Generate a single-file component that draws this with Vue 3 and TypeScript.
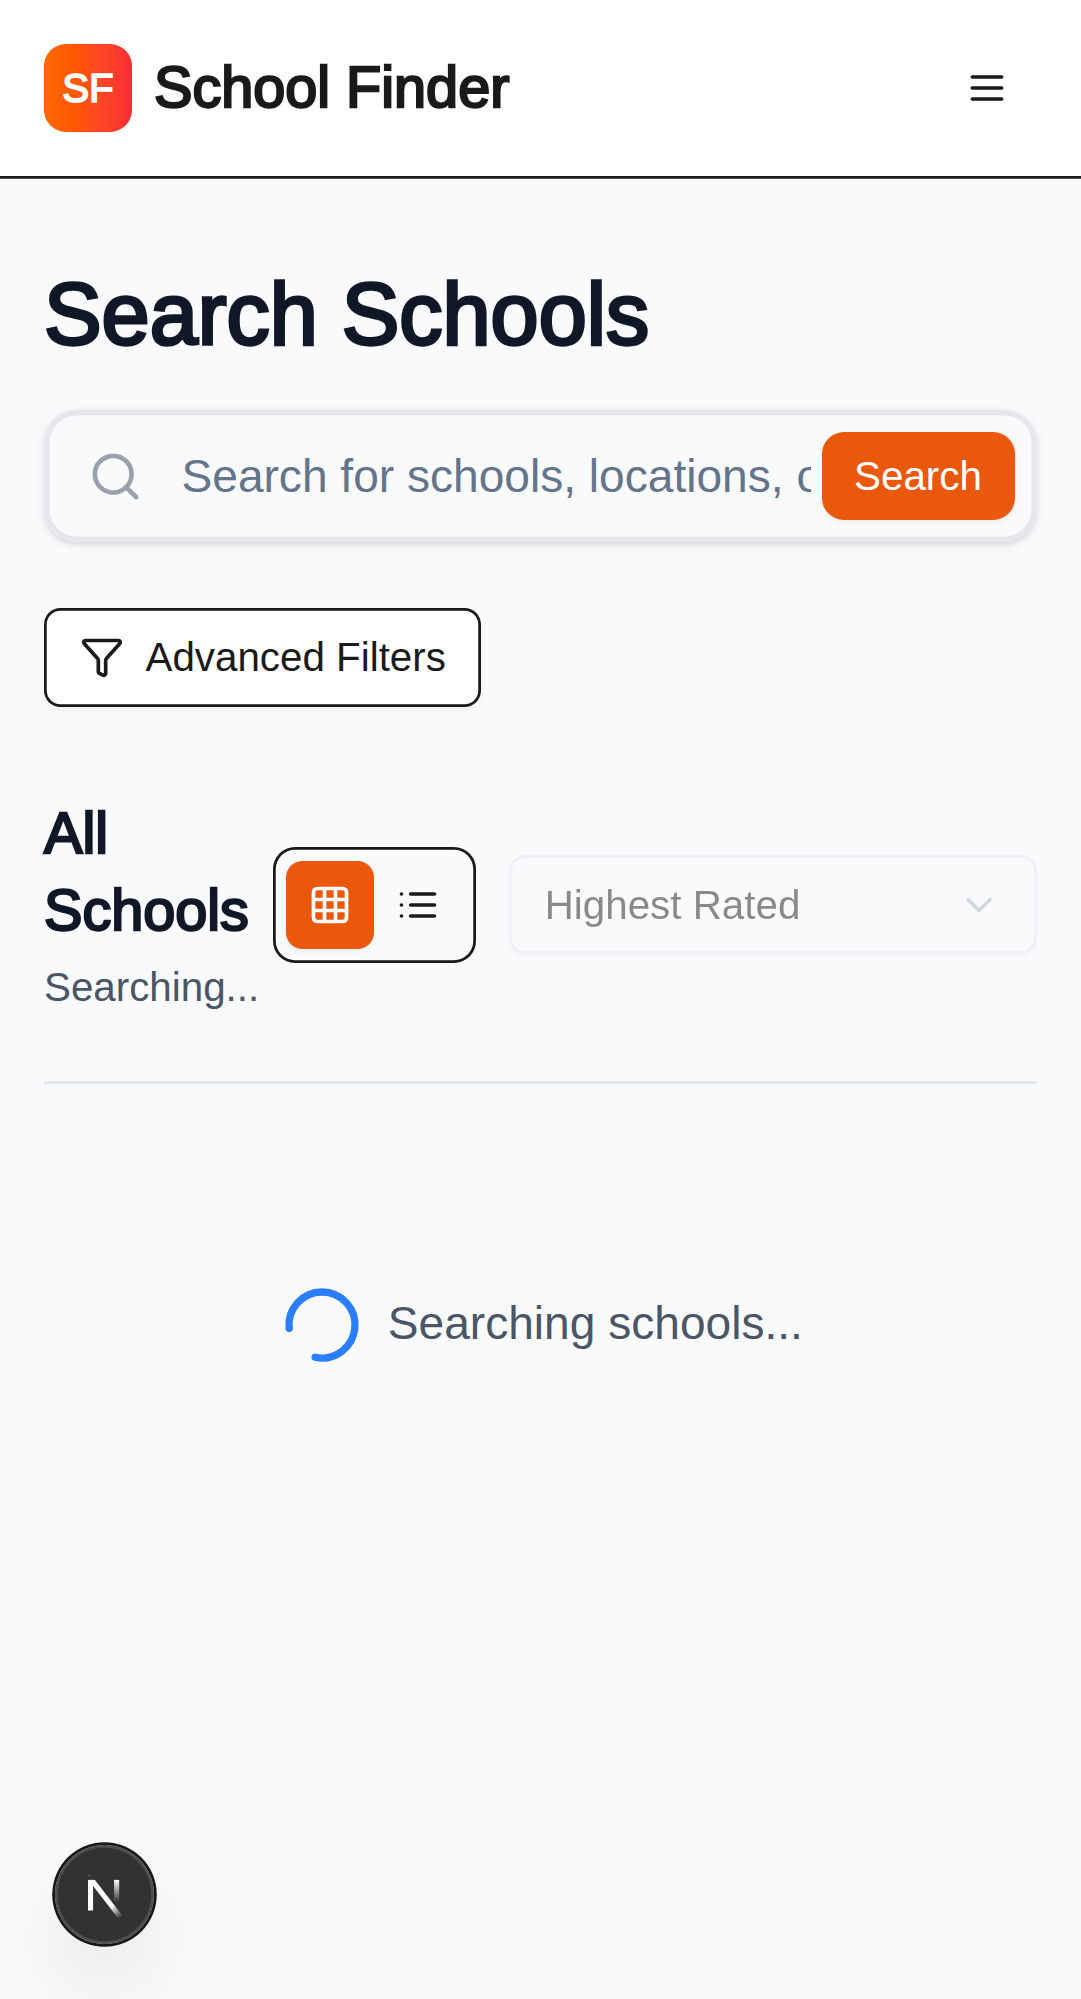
<script setup lang="ts">
import { ref } from 'vue'

type ViewMode = 'grid' | 'list'

const query = ref('')
const view = ref<ViewMode>('grid')
const sortLabel = ref('Highest Rated')
</script>

<template>
  <div class="page">
    <header class="header">
      <a class="brand">
        <span class="logo">SF</span>
        <span class="brand-name">School Finder</span>
      </a>
      <button class="menu-button" type="button" aria-label="Menu">
        <svg class="icon" viewBox="0 0 24 24">
          <path d="M4 6h16M4 12h16M4 18h16" />
        </svg>
      </button>
    </header>

    <main class="content">
      <h1 class="title">Search Schools</h1>

      <div class="search">
        <svg class="icon search-icon" viewBox="0 0 24 24">
          <circle cx="11" cy="11" r="8" />
          <path d="m21 21-4.3-4.3" />
        </svg>
        <input
          v-model="query"
          class="search-input"
          type="text"
          placeholder="Search for schools, locations, or programs..."
        />
        <button class="search-button" type="button">Search</button>
      </div>

      <button class="filters" type="button">
        <svg class="icon" viewBox="0 0 24 24">
          <path
            d="M10 20a1 1 0 0 0 .553.895l2 1A1 1 0 0 0 14 21v-7a2 2 0 0 1 .517-1.341L21.74 4.67A1 1 0 0 0 21 3H3a1 1 0 0 0-.742 1.67l7.225 7.989A2 2 0 0 1 10 14z"
          />
        </svg>
        <span>Advanced Filters</span>
      </button>

      <section class="results-bar">
        <div class="results-heading">
          <h2>All Schools</h2>
          <p>Searching...</p>
        </div>
        <div class="controls">
          <div class="toggle">
            <button
              class="toggle-item"
              :class="{ active: view === 'grid' }"
              type="button"
              aria-label="Grid view"
              @click="view = 'grid'"
            >
              <svg class="icon" viewBox="0 0 24 24">
                <rect width="18" height="18" x="3" y="3" rx="2" />
                <path d="M3 9h18M3 15h18M9 3v18M15 3v18" />
              </svg>
            </button>
            <button
              class="toggle-item"
              :class="{ active: view === 'list' }"
              type="button"
              aria-label="List view"
              @click="view = 'list'"
            >
              <svg class="icon" viewBox="0 0 24 24">
                <path d="M8 6h13M8 12h13M8 18h13M3 6h.01M3 12h.01M3 18h.01" />
              </svg>
            </button>
          </div>
          <button class="select" type="button" disabled>
            <span>{{ sortLabel }}</span>
            <svg class="icon chevron" viewBox="0 0 24 24">
              <path d="m6 9 6 6 6-6" />
            </svg>
          </button>
        </div>
      </section>
      <div class="separator"></div>

      <div class="loading">
        <svg class="icon spinner" viewBox="0 0 24 24">
          <path d="M21 12a9 9 0 1 1-6.219-8.56" />
        </svg>
        <span>Searching schools...</span>
      </div>
    </main>

    <div class="dev-badge">
      <svg class="dev-mark" viewBox="0 0 40 40" fill="none">
        <g transform="translate(12.4 13)">
          <path
            d="M13.3 15.2 L2.34 1 V12.6"
            stroke="url(#mark-diagonal)"
            stroke-width="1.86"
            mask="url(#mark-mask)"
          />
          <path d="M11.825 1.5 V13.1" stroke="url(#mark-bar)" stroke-width="1.86" />
        </g>
        <defs>
          <linearGradient
            id="mark-diagonal"
            x1="9.95555"
            y1="11.1226"
            x2="15.4778"
            y2="17.9671"
            gradientUnits="userSpaceOnUse"
          >
            <stop stop-color="white" />
            <stop offset="0.604072" stop-color="white" stop-opacity="0" />
            <stop offset="1" stop-color="white" stop-opacity="0" />
          </linearGradient>
          <linearGradient
            id="mark-bar"
            x1="11.8222"
            y1="1.40039"
            x2="11.792"
            y2="9.62542"
            gradientUnits="userSpaceOnUse"
          >
            <stop stop-color="white" />
            <stop offset="1" stop-color="white" stop-opacity="0" />
          </linearGradient>
          <mask id="mark-mask">
            <rect width="100%" height="100%" fill="white" />
            <rect width="5" height="1.5" fill="black" />
          </mask>
        </defs>
      </svg>
    </div>
  </div>
</template>

<style>
body {
  margin: 0;
  background: #f9fafc;
}
</style>

<style scoped>
.page {
  box-sizing: border-box;
  height: 1999px;
  overflow: hidden;
  position: relative;
  background: #f9fafc;
  color: #1a1a1a;
  font-family: 'Liberation Sans', Arial, sans-serif;
  font-size: 46.1px;
  line-height: 66px;
}

.page *,
.page *::before {
  box-sizing: border-box;
}

button,
input {
  margin: 0;
  padding: 0;
  border: 0;
  background: transparent;
  font: inherit;
  color: inherit;
}

.icon {
  display: block;
  flex: none;
  width: 44px;
  height: 44px;
  fill: none;
  stroke: currentColor;
  stroke-width: 2;
  stroke-linecap: round;
  stroke-linejoin: round;
}

.header {
  display: flex;
  align-items: center;
  justify-content: space-between;
  height: 178.75px;
  padding: 0 45px 2.75px 44px;
  background: linear-gradient(to top, #555 0 1px, #1a1a1a 1px 3px, #fff 3px);
}

.brand {
  display: flex;
  align-items: center;
  gap: 22px;
}

.logo {
  display: flex;
  align-items: center;
  justify-content: center;
  width: 88px;
  height: 88px;
  border-radius: 22px;
  background: linear-gradient(
    to right in oklab,
    oklch(70.5% 0.213 47.604),
    oklch(63.7% 0.237 25.331)
  );
  color: #fff;
  font-size: 40.33px;
  line-height: 55px;
  -webkit-text-stroke: 1.7px #fff;
}

.brand-name {
  margin-bottom: 2px;
  font-size: 57.6px;
  line-height: 77px;
  -webkit-text-stroke: 2.4px #1a1a1a;
}

.menu-button {
  display: flex;
  align-items: center;
  justify-content: center;
  width: 99px;
  height: 99px;
}

.content {
  padding: 86px 44.25px 0 44px;
}

.title {
  margin: 0 0 46px;
  color: #101828;
  font-size: 86.4px;
  font-weight: 400;
  line-height: 99px;
  -webkit-text-stroke: 3.3px #101828;
}

.search {
  display: flex;
  align-items: center;
  height: 132px;
  margin-bottom: 66px;
  padding: 0 22px 0 44px;
  border-radius: 33px;
  box-shadow:
    inset 0 0 0 5.5px #e5e7eb,
    0 2.75px 8.25px rgba(0, 0, 0, 0.1),
    0 2.75px 5.5px -2.75px rgba(0, 0, 0, 0.1);
}

.search-icon {
  width: 55px;
  height: 55px;
  margin-top: 1px;
  color: #99a1af;
}

.search-input {
  flex: 1;
  min-width: 0;
  height: 66px;
  margin: 0 11px 0 38.5px;
  outline: none;
}

.search-input::placeholder {
  color: #64748b;
  opacity: 1;
}

.search-button {
  flex: none;
  width: 192.5px;
  height: 88px;
  padding: 2px 1px 0 0;
  border-radius: 22px;
  background: #ea580c;
  box-shadow: 0 2.75px 5.5px rgba(0, 0, 0, 0.05);
  color: #fff;
  font-size: 40.33px;
  line-height: 55px;
}

.filters {
  display: flex;
  align-items: center;
  gap: 22px;
  height: 99px;
  margin-bottom: 88px;
  padding: 0 35.5px;
  border-radius: 16.5px;
  background: #fff;
  box-shadow:
    inset 0 0 0 2.75px #1a1a1a,
    0 2.75px 5.5px rgba(0, 0, 0, 0.05);
  font-size: 40.33px;
  line-height: 55px;
  white-space: nowrap;
}

.results-bar {
  display: flex;
  align-items: center;
  padding-bottom: 66px;
}

.results-heading {
  flex: 1;
  min-width: 0;
}

.results-heading h2 {
  margin: 0;
  color: #101828;
  font-size: 57.6px;
  font-weight: 400;
  line-height: 77px;
  -webkit-text-stroke: 2.4px #101828;
}

.results-heading p {
  margin: 11px 0 0;
  color: #4a5565;
  font-size: 40.33px;
  line-height: 55px;
}

.controls {
  display: flex;
  flex: none;
  align-items: center;
  gap: 33px;
}

.toggle {
  display: flex;
  padding: 13.75px;
  border-radius: 22px;
  box-shadow: inset 0 0 0 2.75px #1a1a1a;
}

.toggle-item {
  display: flex;
  align-items: center;
  justify-content: center;
  width: 88px;
  height: 88px;
  border-radius: 16.5px;
}

.toggle-item.active {
  background: #ea580c;
  box-shadow: 0 2.75px 5.5px rgba(0, 0, 0, 0.05);
  color: #fff;
}

.select {
  display: flex;
  align-items: center;
  justify-content: space-between;
  width: 527.75px;
  height: 99px;
  padding: 0 35.75px;
  border-radius: 16.5px;
  box-shadow:
    inset 0 0 0 2.75px #e2e8f0,
    0 2.75px 5.5px rgba(0, 0, 0, 0.05);
  font-size: 40.33px;
  line-height: 55px;
  opacity: 0.5;
}

.select span {
  margin-top: 2px;
}

.chevron {
  color: #64748b;
  opacity: 0.5;
}

.separator {
  height: 2.75px;
  background: #e2e8f0;
}

.loading {
  display: flex;
  align-items: center;
  justify-content: center;
  gap: 22px;
  padding: 197.5px 0;
  color: #4a5565;
}

.loading span {
  margin-bottom: 4px;
}

.spinner {
  width: 88px;
  height: 88px;
  color: #2b7fff;
  transform: rotate(174deg);
}

.dev-badge {
  position: absolute;
  left: 55px;
  bottom: 55px;
  display: flex;
  align-items: center;
  justify-content: center;
  width: 99px;
  height: 99px;
  border-radius: 50%;
  background: rgba(0, 0, 0, 0.8);
  box-shadow:
    0 0 0 2.75px #171717,
    inset 0 0 0 2.75px rgba(255, 255, 255, 0.14),
    0 44px 88px -22px rgba(0, 0, 0, 0.24);
}

.dev-mark {
  flex: none;
  width: 110px;
  height: 110px;
}
</style>
